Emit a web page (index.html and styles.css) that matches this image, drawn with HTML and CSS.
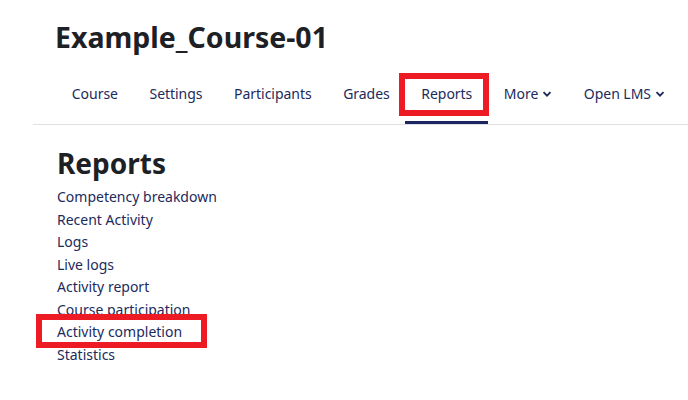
FILE: index.html
```html
<!DOCTYPE html>
<html lang="en">
<head>
<meta charset="utf-8">
<title>Example_Course-01 Reports</title>
<link rel="stylesheet" href="styles.css">
</head>
<body>
<header class="page-header">
  <h1 class="course-title">Example_Course-01</h1>
</header>
<nav class="secondary-nav">
  <ul class="nav-list">
    <li class="nav-item"><a class="nav-link" href="#">Course</a></li>
    <li class="nav-item"><a class="nav-link" href="#">Settings</a></li>
    <li class="nav-item"><a class="nav-link" href="#">Participants</a></li>
    <li class="nav-item"><a class="nav-link" href="#">Grades</a></li>
    <li class="nav-item"><a class="nav-link active" href="#">Reports<span class="highlight highlight-nav"></span></a></li>
    <li class="nav-item"><a class="nav-link" href="#">More<svg class="chev" viewBox="0 0 10 10" width="10" height="10"><path d="M1.5 3.2 L5 6.7 L8.5 3.2" fill="none" stroke="currentColor" stroke-width="1.9"/></svg></a></li>
    <li class="nav-item"><a class="nav-link" href="#">Open LMS<svg class="chev" viewBox="0 0 10 10" width="10" height="10"><path d="M1.5 3.2 L5 6.7 L8.5 3.2" fill="none" stroke="currentColor" stroke-width="1.9"/></svg></a></li>
  </ul>
</nav>
<main class="content">
  <h2 class="section-title">Reports</h2>
  <ul class="report-list">
    <li><a href="#">Competency breakdown</a></li>
    <li><a href="#">Recent Activity</a></li>
    <li><a href="#">Logs</a></li>
    <li><a href="#">Live logs</a></li>
    <li><a href="#">Activity report</a></li>
    <li><a href="#">Course participation</a></li>
    <li class="marked"><a href="#">Activity completion</a><span class="highlight highlight-item"></span></li>
    <li><a href="#">Statistics</a></li>
  </ul>
</main>
</body>
</html>
```
FILE: styles.css
```css
html, body {
  margin: 0;
  padding: 0;
  background: #ffffff;
}
body {
  font-family: "Noto Sans", "Open Sans", sans-serif;
  color: #1d2125;
  width: 688px;
  height: 400px;
  overflow: hidden;
}
a {
  text-decoration: none;
  color: #1c2a5c;
}
.page-header {
  padding: 14px 0 0 55px;
  height: 48px;
}
.course-title {
  margin: 0;
  font-size: 28.5px;
  font-weight: 700;
  line-height: 46px;
  color: #1d2125;
}
.secondary-nav {
  margin-left: 33px;
  border-bottom: 1px solid #dee2e6;
  padding-left: 23px;
}
.nav-list {
  list-style: none;
  margin: 0;
  padding: 0;
  display: flex;
}
.nav-link {
  position: relative;
  display: flex;
  align-items: center;
  gap: 4px;
  padding: 0 15.8px;
  height: 62px;
  font-size: 14px;
  letter-spacing: -0.04px;
  border-bottom: 3px solid transparent;
  padding-top: 4px;
  box-sizing: border-box;
}
.nav-link.active {
  border-bottom-color: #1c2561;
}
.chev {
  display: block;
  margin-top: 1px;
}
.highlight {
  position: absolute;
  border: 6px solid #ed1c24;
  box-sizing: border-box;
  pointer-events: none;
}
.highlight-nav {
  left: -6px;
  right: -1px;
  top: 11px;
  height: 43px;
}
.content {
  padding: 20px 0 0 57px;
}
.section-title {
  margin: 0 0 5px 0;
  font-size: 28px;
  font-weight: 700;
  line-height: 36px;
  color: #1d2125;
}
.report-list {
  list-style: none;
  margin: 0;
  padding: 0;
  font-size: 14px;
  line-height: 22.5px;
}
.report-list li {
  position: relative;
}
.highlight-item {
  left: -21px;
  width: 171px;
  top: -7px;
  height: 34px;
}
```
